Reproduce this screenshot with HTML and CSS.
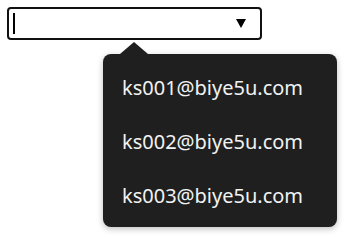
FILE: index.html
```html
<!DOCTYPE html>
<html lang="en">
<head>
  <meta charset="UTF-8" />
  <title>Account picker</title>
  <link rel="stylesheet" href="styles.css">
</head>
<body>
  <div class="picker">
    <div class="field">
      <span class="caret"></span>
      <span class="toggle"></span>
    </div>
    <ul class="menu">
      <li>ks001@biye5u.com</li>
      <li>ks002@biye5u.com</li>
      <li>ks003@biye5u.com</li>
    </ul>
  </div>
</body>
</html>
```

FILE: styles.css
```css
body {
  margin: 0;
  font-family: "Noto Sans", Arial, sans-serif;
  background: #fff;
}
.picker {
  padding: 7px 7px 10px;
}
.field {
  width: 255px;
  height: 33px;
  box-sizing: border-box;
  border: 2px solid #111;
  border-radius: 4px;
  display: flex;
  align-items: center;
  justify-content: space-between;
  padding: 0 14px 0 4px;
}
.caret {
  width: 2px;
  height: 21px;
  background: #000;
}
.toggle {
  width: 0;
  height: 0;
  border-left: 5px solid transparent;
  border-right: 5px solid transparent;
  border-top: 9px solid #000;
}
.menu {
  position: relative;
  width: 234px;
  margin: 14px 0 0 96px;
  padding: 7px 0 4px;
  list-style: none;
  background: #1f1f1f;
  border-radius: 8px;
  box-shadow: 0 2px 6px rgba(0,0,0,0.25);
}
.menu::before {
  content: "";
  position: absolute;
  left: 17px;
  top: -12px;
  border-left: 14px solid transparent;
  border-right: 14px solid transparent;
  border-bottom: 12px solid #1f1f1f;
}
.menu li {
  height: 54px;
  line-height: 54px;
  padding-left: 19px;
  color: #f2f2f2;
  font-size: 20px;
}
```
